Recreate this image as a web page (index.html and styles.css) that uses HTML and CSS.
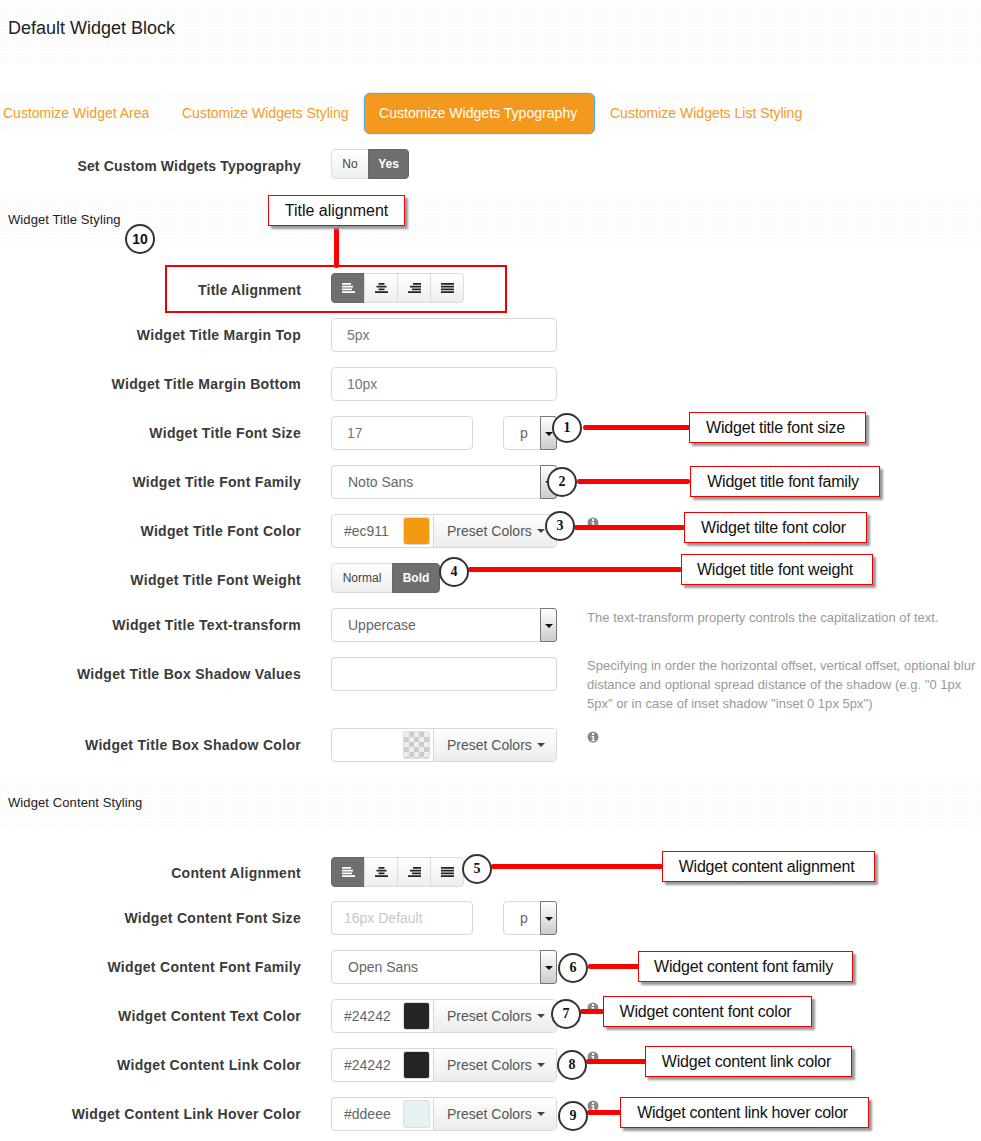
FILE: index.html
```html
<!DOCTYPE html>
<html lang="en">
<head>
<meta charset="utf-8">
<title>Default Widget Block</title>
<link rel="stylesheet" href="styles.css">
</head>
<body>
<svg class="defs" width="0" height="0" aria-hidden="true">
  <symbol id="al" viewBox="0 0 13 10"><path d="M0 .8h9M0 3.6h11M0 6.4h10M0 9.2h13" stroke="currentColor" stroke-width="1.8"/></symbol>
  <symbol id="ac" viewBox="0 0 13 10"><path d="M3.5 .8h6M1.5 3.6h10M3.5 6.4h6M0 9.2h13" stroke="currentColor" stroke-width="1.8"/></symbol>
  <symbol id="ar" viewBox="0 0 13 10"><path d="M5 .8h8M2 3.6h11M4 6.4h9M0 9.2h13" stroke="currentColor" stroke-width="1.8"/></symbol>
  <symbol id="aj" viewBox="0 0 13 10"><path d="M0 .8h13M0 3.6h13M0 6.4h13M0 9.2h13" stroke="currentColor" stroke-width="1.8"/></symbol>
  <symbol id="info" viewBox="0 0 12 12"><circle cx="6" cy="6" r="5.5" fill="#888"/><rect x="5" y="2" width="2" height="2" fill="#fff"/><path d="M4.5 5H7v4h1v1H4.5V9h1V6h-1z" fill="#fff"/></symbol>
</svg>
<div class="page">
  <header class="band head-band"><h1 class="page-title">Default Widget Block</h1></header>

  <nav class="tabs">
    <a class="tab t1">Customize Widget Area</a>
    <a class="tab t2">Customize Widgets Styling</a>
    <a class="tab t3 active">Customize Widgets Typography</a>
    <a class="tab t4">Customize Widgets List Styling</a>
  </nav>

  <div class="row first-row toggle-row">
    <div class="label">Set Custom Widgets Typography</div>
    <div class="group"><span class="btn yn">No</span><span class="btn yn on">Yes</span></div>
  </div>

  <section class="band sec-title"><h2 class="sec">Widget Title Styling</h2></section>

  <div class="row align-row r-title-align">
    <div class="label">Title Alignment</div>
    <div class="group">
      <span class="btn ic on"><svg class="i"><use href="#al"/></svg></span><span class="btn ic"><svg class="i"><use href="#ac"/></svg></span><span class="btn ic"><svg class="i"><use href="#ar"/></svg></span><span class="btn ic"><svg class="i"><use href="#aj"/></svg></span>
    </div>
  </div>
  <div class="row">
    <div class="label">Widget Title Margin Top</div>
    <div class="field w226">5px</div>
  </div>
  <div class="row">
    <div class="label">Widget Title Margin Bottom</div>
    <div class="field w226">10px</div>
  </div>
  <div class="row">
    <div class="label">Widget Title Font Size</div>
    <div class="field w142">17</div>
    <div class="select unit"><span class="val">p</span><span class="arrow"></span></div>
  </div>
  <div class="row">
    <div class="label">Widget Title Font Family</div>
    <div class="select w226"><span class="val">Noto Sans</span><span class="arrow"></span></div>
  </div>
  <div class="row">
    <div class="label">Widget Title Font Color</div>
    <div class="picker"><span class="hex">#ec911</span><span class="swatch orange"></span><span class="preset">Preset Colors<i class="caret"></i></span></div>
    <svg class="info"><use href="#info"/></svg>
  </div>
  <div class="row thin">
    <div class="label">Widget Title Font Weight</div>
    <div class="group"><span class="btn nb">Normal</span><span class="btn nb on">Bold</span></div>
  </div>
  <div class="row">
    <div class="label">Widget Title Text-transform</div>
    <div class="select w226"><span class="val">Uppercase</span><span class="arrow"></span></div>
    <p class="help">The text-transform property controls the capitalization of text.</p>
  </div>
  <div class="row tall">
    <div class="label">Widget Title Box Shadow Values</div>
    <div class="field w226"></div>
    <p class="help">Specifying in order the horizontal offset, vertical offset, optional blur distance and optional spread distance of the shadow (e.g. "0 1px 5px" or in case of inset shadow "inset 0 1px 5px")</p>
  </div>
  <div class="row">
    <div class="label">Widget Title Box Shadow Color</div>
    <div class="picker"><span class="hex"></span><span class="swatch check"></span><span class="preset">Preset Colors<i class="caret"></i></span></div>
    <svg class="info"><use href="#info"/></svg>
  </div>

  <section class="band sec-content"><h2 class="sec">Widget Content Styling</h2></section>

  <div class="row align-row r-content-align">
    <div class="label">Content Alignment</div>
    <div class="group">
      <span class="btn ic on"><svg class="i"><use href="#al"/></svg></span><span class="btn ic"><svg class="i"><use href="#ac"/></svg></span><span class="btn ic"><svg class="i"><use href="#ar"/></svg></span><span class="btn ic"><svg class="i"><use href="#aj"/></svg></span>
    </div>
  </div>
  <div class="row">
    <div class="label">Widget Content Font Size</div>
    <div class="field w142 ph">16px Default</div>
    <div class="select unit"><span class="val">p</span><span class="arrow"></span></div>
  </div>
  <div class="row">
    <div class="label">Widget Content Font Family</div>
    <div class="select w226"><span class="val">Open Sans</span><span class="arrow"></span></div>
  </div>
  <div class="row">
    <div class="label">Widget Content Text Color</div>
    <div class="picker"><span class="hex">#24242</span><span class="swatch dark"></span><span class="preset">Preset Colors<i class="caret"></i></span></div>
    <svg class="info"><use href="#info"/></svg>
  </div>
  <div class="row">
    <div class="label">Widget Content Link Color</div>
    <div class="picker"><span class="hex">#24242</span><span class="swatch dark"></span><span class="preset">Preset Colors<i class="caret"></i></span></div>
    <svg class="info"><use href="#info"/></svg>
  </div>
  <div class="row">
    <div class="label">Widget Content Link Hover Color</div>
    <div class="picker"><span class="hex">#ddeee</span><span class="swatch pale"></span><span class="preset">Preset Colors<i class="caret"></i></span></div>
    <svg class="info"><use href="#info"/></svg>
  </div>

  <!-- annotations layered over the screenshot -->
  <div class="hl"></div>
  <div class="ln v"></div>
  <div class="ln l1"></div><div class="ln l2"></div><div class="ln l3"></div><div class="ln l4"></div><div class="ln l5"></div><div class="ln l6"></div><div class="ln l7"></div><div class="ln l8"></div><div class="ln l9"></div>
  <div class="call c0">Title alignment</div>
  <div class="call c1">Widget title font size</div>
  <div class="call c2">Widget title font family</div>
  <div class="call c3">Widget tilte font color</div>
  <div class="call c4">Widget title font weight</div>
  <div class="call c5">Widget content alignment</div>
  <div class="call c6">Widget content font family</div>
  <div class="call c7">Widget content font color</div>
  <div class="call c8">Widget content link color</div>
  <div class="call c9">Widget content link hover color</div>
  <div class="num n10">10</div><div class="num n1">1</div><div class="num n2">2</div><div class="num n3">3</div><div class="num n4">4</div><div class="num n5">5</div><div class="num n6">6</div><div class="num n7">7</div><div class="num n8">8</div><div class="num n9">9</div>
</div>
</body>
</html>
```

FILE: styles.css
```css
* { box-sizing: border-box; }
html, body { margin: 0; padding: 0; background: #fff; }
body { font-family: "Liberation Sans", Arial, sans-serif; color: #333; }
.defs { position: absolute; }
.page { position: relative; width: 981px; height: 1141px; overflow: hidden; padding-top: 4px; }

.band {
  background-color: #fefefe;
  background-image: radial-gradient(circle, #f4f4f4 1px, transparent 1px);
  background-size: 3px 3px;
}
.head-band { height: 60px; padding: 14px 8px 0; }
.page-title { margin: 0; font-size: 18px; line-height: 20px; font-weight: 400; color: #222; }

.tabs { display: flex; height: 41px; margin-top: 29px; }
.tab { display: block; font-size: 14px; line-height: 40px; color: #f39b1f; background: #fdfdfd; border-radius: 5px; }
.t1 { width: 165px; padding-left: 3px; }
.t2 { width: 192px; margin-left: 3px; padding-left: 14px; }
.t3 { width: 231px; margin-left: 4px; padding-left: 14px; }
.t4 { width: 219px; margin-left: 2px; padding-left: 13px; }
.tab.active { color: #fff; background: #f39a1e; border: 1px solid #5fa8dc; border-radius: 6px; box-shadow: 0 0 2px #8cc4ec; line-height: 38px; letter-spacing: .03px; }

.row { display: flex; align-items: flex-start; height: 34px; margin-top: 15px; position: relative; }
.label { width: 301px; margin-right: 30px; flex: none; text-align: right; font-size: 14px; font-weight: 700; line-height: 34px; letter-spacing: .3px; color: #3a3a3a; }
.first-row { height: 30px; margin-top: 15px; }
.first-row .label { line-height: 34px; letter-spacing: .16px; }
.thin { height: 30px; }
.thin .label { line-height: 34px; }
.tall { height: 56px; margin-top: 15px; }
.tall .help { margin-top: -1px; }

.sec-title { height: 49px; margin-top: 15px; padding: 18px 8px 0; }
.sec-content { height: 47px; margin-top: 16px; padding: 17px 8px 0; }
.sec { margin: 0; font-size: 13px; line-height: 16px; font-weight: 400; color: #222; letter-spacing: .1px; }

.align-row { height: 30px; }
.align-row .label { line-height: 34px; letter-spacing: .17px; }
.r-title-align { margin-top: 30px; }
.r-title-align + .row { margin-top: 15px; }
.r-content-align { margin-top: 32px; }
.r-content-align .label { line-height: 32px; letter-spacing: .3px; }
.r-content-align + .row { margin-top: 14px; }

.group { display: flex; height: 30px; }
.btn { display: flex; align-items: center; justify-content: center; height: 30px; font-size: 12px; color: #444; background: linear-gradient(#fff, #eee); border: 1px solid #ddd; margin-left: -1px; }
.btn:first-child { margin-left: 0; border-radius: 4px 0 0 4px; }
.btn:last-child { border-radius: 0 4px 4px 0; }
.btn.on { background: #6f6f6f; color: #fff; border-color: #666; font-weight: 700; }
.yn { width: 38px; }
.yn.on { width: 41px; }
.nb { width: 62px; }
.nb.on { width: 48px; }
.ic { width: 34px; color: #222; }
.ic.on { color: #fff; }
.i { width: 13px; height: 10px; margin-top: -1px; }

.field { height: 34px; border: 1px solid #d8d8d8; border-radius: 4px; padding-left: 15px; font-size: 14px; line-height: 32px; color: #777; background: #fff; }
.w226 { width: 226px; }
.w142 { width: 142px; }
.ph { color: #c8c8c8; padding-left: 12px; }

.select { display: flex; height: 34px; border: 1px solid #d8d8d8; border-radius: 4px; background: #fff; font-size: 14px; line-height: 32px; color: #666; }
.select .val { flex: 1; padding-left: 16px; }
.arrow { position: relative; width: 17px; height: 34px; margin: -1px -1px 0 0; flex: none; background: linear-gradient(#fff, #ccc); border: 1px solid #777; border-radius: 0 3px 3px 0; }
.arrow::after { content: ""; position: absolute; left: 4px; top: 15px; border: 4px solid transparent; border-top-color: #111; border-bottom: 0; }
.unit { width: 54px; margin-left: 30px; }
.unit .val { padding-left: 16px; }

.picker { display: flex; align-items: center; width: 226px; height: 34px; border: 1px solid #d8d8d8; border-radius: 4px; background: #fff; font-size: 14px; color: #666; }
.hex { width: 71px; padding-left: 12px; line-height: 32px; }
.swatch { width: 27px; height: 28px; border-radius: 3px; border: 1px solid #ddd; }
.orange { background: #f39a12; }
.dark { background: #242424; }
.pale { background: #e4f2f2; }
.check { background-color: #fff; background-image: repeating-conic-gradient(#ccc 0 25%, #eee 0 50%); background-size: 10px 10px; }
.preset { display: flex; align-items: center; height: 32px; margin-left: 3px; padding-left: 13px; flex: 1; background: linear-gradient(#fff, #ececec); border-left: 1px solid #d8d8d8; border-radius: 0 3px 3px 0; color: #555; }
.caret { margin-left: 5px; border: 4px solid transparent; border-top-color: #444; border-bottom: 0; }
.info { width: 12px; height: 12px; margin: 3px 0 0 30px; flex: none; }

.help { margin: 0 0 0 30px; width: 392px; font-size: 13px; line-height: 19px; color: #999; letter-spacing: .03px; }

.hl { position: absolute; left: 165px; top: 265px; width: 342px; height: 48px; border: 2px solid #ee0000; }
.ln { position: absolute; background: #f00; height: 5px; border-radius: 2px; }
.v { left: 334px; top: 224px; width: 5px; height: 44px; }
.l1 { left: 583px; top: 425px; width: 109px; }
.l2 { left: 577px; top: 479px; width: 113px; }
.l3 { left: 574px; top: 525px; width: 111px; }
.l4 { left: 468px; top: 567px; width: 214px; }
.l5 { left: 491px; top: 864px; width: 172px; }
.l6 { left: 588px; top: 964px; width: 52px; }
.l7 { left: 580px; top: 1009px; width: 26px; }
.l8 { left: 586px; top: 1059px; width: 62px; }
.l9 { left: 587px; top: 1110px; width: 36px; }

.call { position: absolute; height: 31px; padding-right: 4px; border: 1px solid #ee0000; background: #fff; box-shadow: 3px 3px 2px #999; font-size: 16px; line-height: 29px; text-align: center; color: #111; white-space: nowrap; letter-spacing: -.2px; }
.c0 { left: 268px; top: 195px; width: 137px; padding-right: 0; letter-spacing: 0; }
.c1 { left: 689px; top: 412px; width: 177px; }
.c2 { left: 690px; top: 466px; width: 190px; }
.c3 { left: 684px; top: 512px; width: 183px; }
.c4 { left: 681px; top: 554px; width: 192px; }
.c5 { left: 662px; top: 851px; width: 213px; }
.c6 { left: 638px; top: 951px; width: 215px; }
.c7 { left: 603px; top: 996px; width: 209px; }
.c8 { left: 645px; top: 1046px; width: 207px; }
.c9 { left: 620px; top: 1097px; width: 249px; letter-spacing: -.26px; }

.num { position: absolute; width: 30px; height: 30px; border: 2px solid #333; border-radius: 50%; background: #fff; font: 700 14px/26px "Liberation Serif", serif; text-align: center; color: #111; }
.n10 { left: 125px; top: 224px; font-family: "Liberation Sans", sans-serif; }
.n1 { left: 552px; top: 413px; }
.n2 { left: 547px; top: 467px; }
.n3 { left: 545px; top: 511px; }
.n4 { left: 439px; top: 557px; }
.n5 { left: 462px; top: 854px; }
.n6 { left: 558px; top: 953px; }
.n7 { left: 551px; top: 999px; }
.n8 { left: 557px; top: 1050px; }
.n9 { left: 558px; top: 1101px; }
```
